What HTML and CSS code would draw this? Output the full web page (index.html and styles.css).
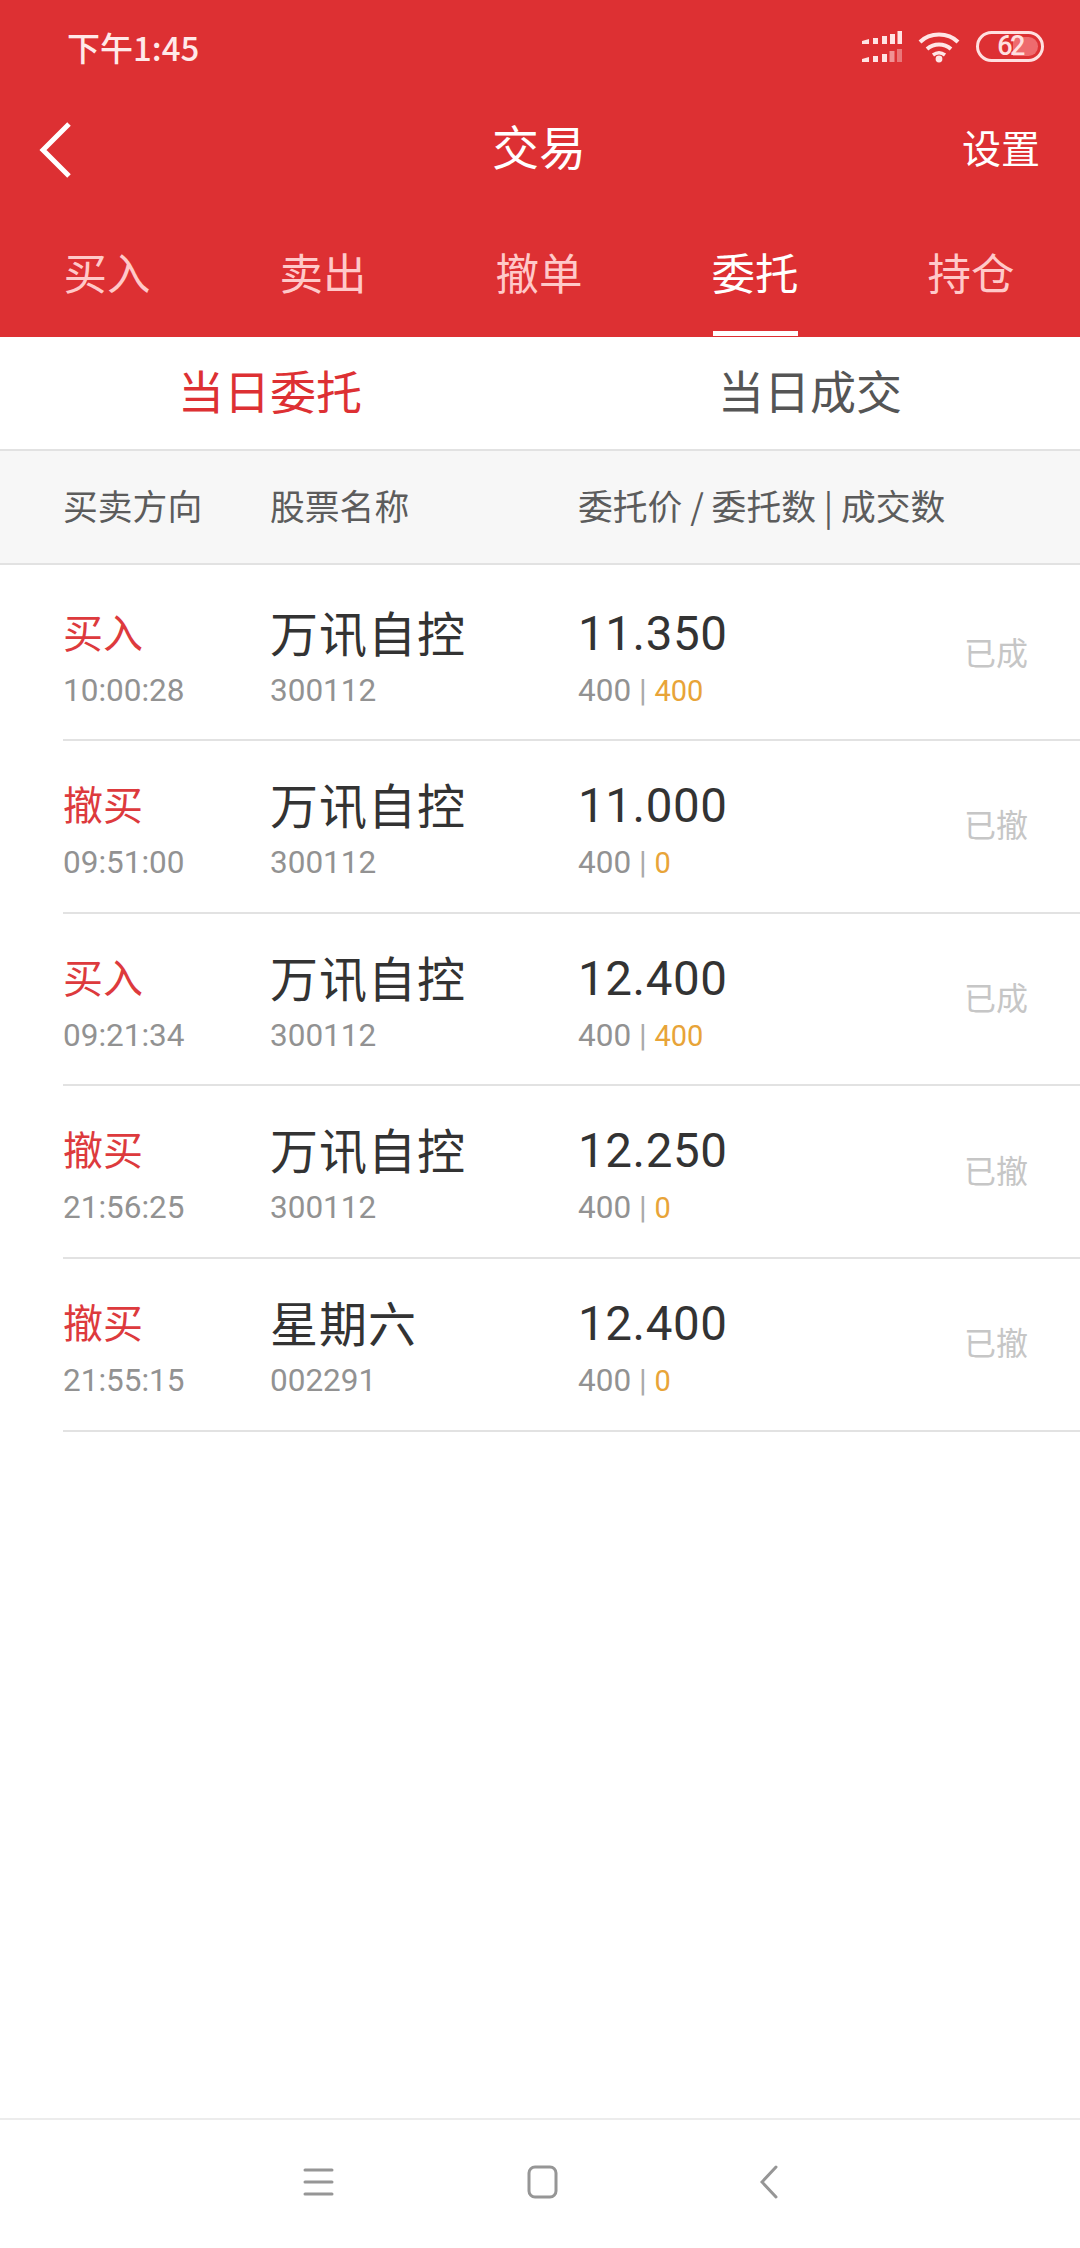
FILE: index.html
```html
<!DOCTYPE html>
<html lang="zh-CN">
<head>
<meta charset="utf-8">
<title>交易</title>
<link rel="stylesheet" href="styles.css">
</head>
<body>
<div class="app">
  <header class="head">
    <div class="status">
      <span class="clock">下午1:45</span>
      <div class="status-icons">
        <svg class="sig" width="40" height="32" viewBox="0 0 40 32">
          <g fill="#ffe4e4">
            <path d="M0 10l7-2v5H0zM11 7h5v6h-5zM20 5h5v8h-5zM28 3h5v10h-5z"/><rect x="35.500" y="0" width="4.500" height="13"/>
            <path d="M0 28l7-2v5H0zM11 25h5v6h-5zM20 23h5v8h-5z"/>
          </g>
          <g fill="#ffe4e4" opacity=".55"><rect x="27.500" y="20" width="5" height="11"/></g>
          <g fill="#ffe4e4" opacity=".4"><rect x="35" y="18" width="5" height="13"/></g>
        </svg>
        <svg class="wifi" width="44" height="32" viewBox="0 0 42 32" fill="none" stroke="#ffe6e6" stroke-width="4">
          <path d="M2 11C12 1 30 1 40 11"/><path d="M9 18c7-6 17-6 24 0"/><path d="M15 24c4-3 8-3 12 0" stroke-width="3.5"/><circle cx="21" cy="28" r="3.4" fill="#ffe6e6" stroke="none"/>
        </svg>
        <div class="batt"><span class="batt-fill"></span><span class="batt-num">62</span></div>
      </div>
    </div>
    <div class="nav">
      <svg class="back" width="34" height="56" viewBox="0 0 34 56" fill="none" stroke="#fff" stroke-width="5">
        <path d="M31 2 5 28l26 26"/>
      </svg>
      <h1 class="title">交易</h1>
      <span class="setting">设置</span>
    </div>
    <nav class="tabs">
      <span class="tab">买入</span>
      <span class="tab">卖出</span>
      <span class="tab">撤单</span>
      <span class="tab on">委托</span>
      <span class="tab">持仓</span>
    </nav>
  </header>

  <div class="sub">
    <span class="sub-tab on">当日委托</span>
    <span class="sub-tab">当日成交</span>
  </div>

  <div class="thead">
    <span>买卖方向</span>
    <span>股票名称</span>
    <span>委托价 / 委托数 | 成交数</span>
  </div>

  <main class="list">
    <div class="row first">
      <div class="cell"><span class="dir">买入</span><span class="meta">10:00:28</span></div>
      <div class="cell"><span class="name">万讯自控</span><span class="meta">300112</span></div>
      <div class="cell"><span class="price">11.350</span><span class="meta">400 <i class="sep">|</i> <b class="done">400</b></span></div>
      <span class="state">已成</span>
    </div>
    <div class="row">
      <div class="cell"><span class="dir">撤买</span><span class="meta">09:51:00</span></div>
      <div class="cell"><span class="name">万讯自控</span><span class="meta">300112</span></div>
      <div class="cell"><span class="price">11.000</span><span class="meta">400 <i class="sep">|</i> <b class="done">0</b></span></div>
      <span class="state">已撤</span>
    </div>
    <div class="row">
      <div class="cell"><span class="dir">买入</span><span class="meta">09:21:34</span></div>
      <div class="cell"><span class="name">万讯自控</span><span class="meta">300112</span></div>
      <div class="cell"><span class="price">12.400</span><span class="meta">400 <i class="sep">|</i> <b class="done">400</b></span></div>
      <span class="state">已成</span>
    </div>
    <div class="row">
      <div class="cell"><span class="dir">撤买</span><span class="meta">21:56:25</span></div>
      <div class="cell"><span class="name">万讯自控</span><span class="meta">300112</span></div>
      <div class="cell"><span class="price">12.250</span><span class="meta">400 <i class="sep">|</i> <b class="done">0</b></span></div>
      <span class="state">已撤</span>
    </div>
    <div class="row">
      <div class="cell"><span class="dir">撤买</span><span class="meta">21:55:15</span></div>
      <div class="cell"><span class="name">星期六</span><span class="meta">002291</span></div>
      <div class="cell"><span class="price">12.400</span><span class="meta">400 <i class="sep">|</i> <b class="done">0</b></span></div>
      <span class="state">已撤</span>
    </div>
  </main>

  <footer class="sysbar">
    <svg class="sys-menu" width="32" height="30" viewBox="0 0 32 30" fill="none" stroke="#969696" stroke-width="3" stroke-linecap="round"><path d="M2 3h27M2 15h27M2 27h27"/></svg>
    <svg width="32" height="34" viewBox="0 0 32 34" fill="none" stroke="#969696" stroke-width="3"><rect x="2" y="2" width="27" height="30" rx="6"/></svg>
    <svg width="18" height="34" viewBox="0 0 18 34" fill="none" stroke="#969696" stroke-width="3" stroke-linecap="round"><path d="M16 2 2 17l14 15"/></svg>
  </footer>
</div>
</body>
</html>
```

FILE: styles.css
```css
* { box-sizing: border-box; }
html, body { margin: 0; padding: 0; background: #fff; }
body { font-family: Roboto, "Noto Sans CJK SC", sans-serif; }
.app { width: 1080px; height: 2248px; display: flex; flex-direction: column; overflow: hidden; }

.head { height: 337px; background: #dd3033; color: #fff; display: flex; flex-direction: column; }
.status { height: 82px; padding: 0 36px 0 67px; display: flex; justify-content: space-between; align-items: center; flex: none; }
.clock { font-size: 33px; font-weight: 500; color: #ffe9e9; line-height: 1; font-family: "Noto Sans CJK SC", sans-serif; margin-top: 12px; }
.status-icons { display: flex; align-items: center; gap: 15px; margin-top: 11px; }
.batt { position: relative; width: 68px; height: 31px; border: 3px solid #ffe0e0; border-radius: 16px; }
.batt-fill { position: absolute; left: 3px; top: 3px; bottom: 3px; right: 3px; border-radius: 10px; background: linear-gradient(90deg, transparent 55%, #ee6b6e 55%); }
.batt-num { position: relative; display: block; text-align: center; font-size: 27px; letter-spacing: -2.5px; line-height: 25px; font-weight: 500; color: #ffe0e0; }

.nav { height: 118px; flex: none; padding: 8px 40px 0 38px; display: flex; align-items: center; justify-content: space-between; position: relative; }
.back { display: block; margin-top: 9px; }
.title { position: absolute; left: 0; right: 0; margin: 0; text-align: center; font-size: 47px; font-weight: 400; line-height: 60px; padding-right: 2px; font-family: "Noto Sans CJK SC", sans-serif; }
.setting { font-size: 39px; line-height: 50px; font-family: "Noto Sans CJK SC", sans-serif; margin-top: 2px; }

.tabs { flex: 1; display: grid; grid-template-columns: repeat(5, 216px); margin-left: -1px; }
.tab { position: relative; justify-self: center; padding-top: 42px; font-size: 43.5px; line-height: 60px; color: #ffc9c9; font-family: "Noto Sans CJK SC", sans-serif; }
.tab.on { color: #fff; }
.tab.on::after { content: ""; position: absolute; left: 1px; right: 1px; bottom: 1px; height: 5px; background: #fff; }

.sub { height: 114px; display: grid; grid-template-columns: 1fr 1fr; border-bottom: 2px solid #e2e2e2; }
.sub-tab { font-size: 46px; line-height: 104px; text-align: center; color: #555; font-family: "Noto Sans CJK SC", sans-serif; }
.sub-tab.on { color: #dd3033; }

.thead { height: 114px; background: #f7f7f7; border-bottom: 2px solid #e2e2e2; display: grid; grid-template-columns: 207px 308px 1fr; padding: 0 0 5px 63px; align-items: center; font-size: 34.8px; color: #5c5c5c; font-family: "Noto Sans CJK SC", sans-serif; }

.list { flex: 1; display: flex; flex-direction: column; }
.row { height: 172.7px; margin-left: 63px; border-bottom: 2px solid #e2e2e2; display: grid; grid-template-columns: 207px 308px 1fr auto; padding-right: 52px; align-items: center; }
.row.first { height: 176px; padding-top: 4px; }
.cell { display: flex; flex-direction: column; padding-top: 9px; }
.dir { font-size: 40px; line-height: 54px; color: #dd3a3d; font-family: "Noto Sans CJK SC", sans-serif; margin-top: -3px; margin-bottom: 3px; }
.name { font-size: 48px; line-height: 54px; color: #333; letter-spacing: 1px; font-family: "Noto Sans CJK SC", sans-serif; margin-top: -3px; margin-bottom: 3px; }
.price { font-size: 47.5px; line-height: 54px; color: #333; letter-spacing: .6px; }
.meta { font-size: 31.5px; line-height: 40px; color: #929292; margin-top: 10px; }
.sep { font-style: normal; color: #aaa; }
.done { font-weight: 400; font-size: 29px; color: #e8a438; }
.state { font-size: 32px; color: #c6c6c6; margin-top: -6px; font-family: "Noto Sans CJK SC", sans-serif; }

.sysbar { height: 130px; border-top: 2px solid #ececec; display: grid; grid-template-columns: repeat(3, 226px); justify-content: center; align-items: center; justify-items: center; padding: 0 0 4px 5px; }
.sysbar svg { display: block; }
.sys-menu { margin-left: 5px; }
```
